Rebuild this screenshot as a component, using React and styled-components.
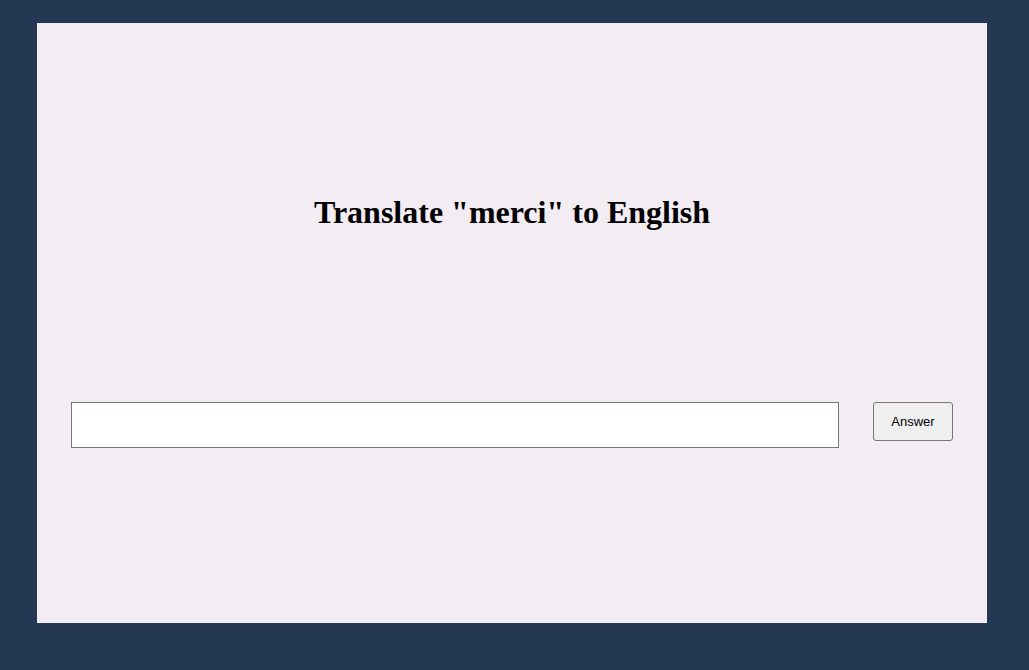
import React from "react";
import styled, { createGlobalStyle } from "styled-components";

const Global = createGlobalStyle`
  html, body { margin: 0; padding: 0; }
  body { background: #233753; }
`;

const Page = styled.div`
  box-sizing: border-box;
  width: 1029px;
  height: 670px;
  padding: 23px 42px 47px 37px;
  background: #233753;
`;

const Card = styled.div`
  box-sizing: border-box;
  width: 950px;
  height: 600px;
  background: #f3ecf3;
  padding: 171px 34px 0 34px;
  display: flex;
  flex-direction: column;
  gap: 171px;
`;

const Title = styled.h1`
  margin: 0;
  font-family: "Liberation Serif", "Times New Roman", serif;
  font-weight: bold;
  font-size: 32px;
  line-height: 37px;
  text-align: center;
  color: #000;
`;

const Row = styled.div`
  display: flex;
  align-items: flex-start;
  gap: 34px;
`;

const Input = styled.input`
  box-sizing: border-box;
  flex: 1;
  height: 46px;
  border: 1px solid #767676;
  border-radius: 0;
  background: #fff;
  font-family: "Liberation Sans", Arial, sans-serif;
  font-size: 16px;
  padding: 0 8px;
  outline: none;
`;

const Button = styled.button`
  box-sizing: border-box;
  width: 80px;
  height: 39px;
  border: 1px solid #767676;
  border-radius: 3px;
  background: #efefef;
  color: #000;
  font-family: "Liberation Sans", Arial, sans-serif;
  font-size: 13px;
  padding: 0;
  cursor: pointer;
`;

export default function App() {
  return (
    <>
      <Global />
      <Page>
        <Card>
          <Title>Translate "merci" to English</Title>
          <Row>
            <Input type="text" />
            <Button>Answer</Button>
          </Row>
        </Card>
      </Page>
    </>
  );
}
